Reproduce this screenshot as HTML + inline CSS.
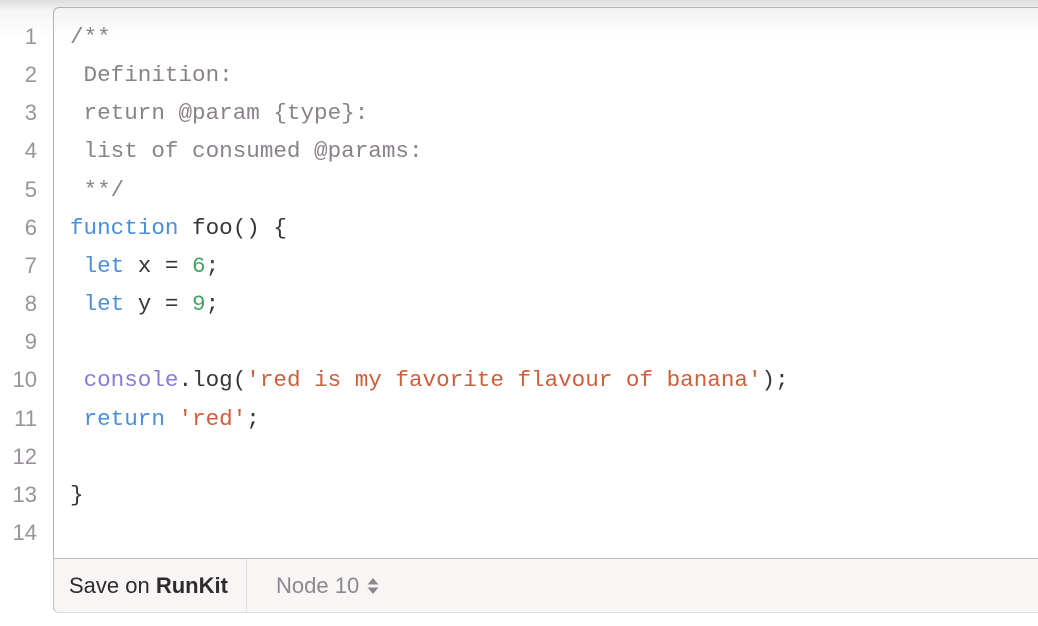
<!DOCTYPE html>
<html><head><meta charset="utf-8"><style>
html,body{margin:0;padding:0;width:1038px;height:626px;overflow:hidden;background:#fff;position:relative;font-family:"Liberation Sans",sans-serif}
.topfade{position:absolute;left:0;top:0;width:1038px;height:40px;background:linear-gradient(#dcdcdc 0,#ececec 7px,#f4f4f4 10px,#fff 38px)}
.box{position:absolute;left:53px;top:7px;width:1000px;height:606px;border:1px solid #b8b0b8;border-radius:6px;border-right:none;box-sizing:border-box;background:linear-gradient(#f2f2f2 0,#fff 28px);}
.gut{position:absolute;left:0;top:18px;width:37px;text-align:right;font-family:"Liberation Sans",sans-serif;font-size:22px;line-height:38.15px;color:#9a929a}
.code{position:absolute;left:70px;top:18px;font-family:"Liberation Mono",monospace;font-size:22.6px;line-height:38.15px;color:#3b343b;white-space:pre}
.c{color:#8a828a}.k{color:#4a8fd8}.n{color:#3fa564}.s{color:#cd5e3c}.p{color:#8b7ad8}
.foot{position:absolute;left:53px;top:558px;width:985px;height:55px;border-top:1px solid #c0b8c0;border-left:1px solid #c8c0c8;border-bottom:1px solid #ddd;border-radius:0 0 0 6px;background:#f7f6f5;box-sizing:border-box}
.save{position:absolute;left:15px;top:14px;font-size:22px;color:#2f2a30}
.div{position:absolute;left:192px;top:0;width:1px;height:54px;background:#e2dde2}
.node{position:absolute;left:222px;top:14px;font-size:22px;color:#8f878f}
</style></head><body>
<div class="topfade"></div>
<div class="box"></div>
<div class="gut">1<br>2<br>3<br>4<br>5<br>6<br>7<br>8<br>9<br>10<br>11<br>12<br>13<br>14</div>
<div class="code"><span class="c">/**
 Definition:
 return @param {type}:
 list of consumed @params:
 **/</span>
<span class="k">function</span> foo() {
 <span class="k">let</span> x = <span class="n">6</span>;
 <span class="k">let</span> y = <span class="n">9</span>;

 <span class="p">console</span>.log(<span class="s">'red is my favorite flavour of banana'</span>);
 <span class="k">return</span> <span class="s">'red'</span>;

}
</div>
<div class="foot">
<div class="save">Save on <b>RunKit</b></div>
<div class="div"></div>
<div class="node">Node 10 <svg width="12" height="18" viewBox="0 0 12 18" style="vertical-align:-2px;margin-left:2px"><path d="M6 1L11.5 7.5H0.5Z M6 17L11.5 10.5H0.5Z" fill="#8f878f"/></svg></div>
</div>
</body></html>
